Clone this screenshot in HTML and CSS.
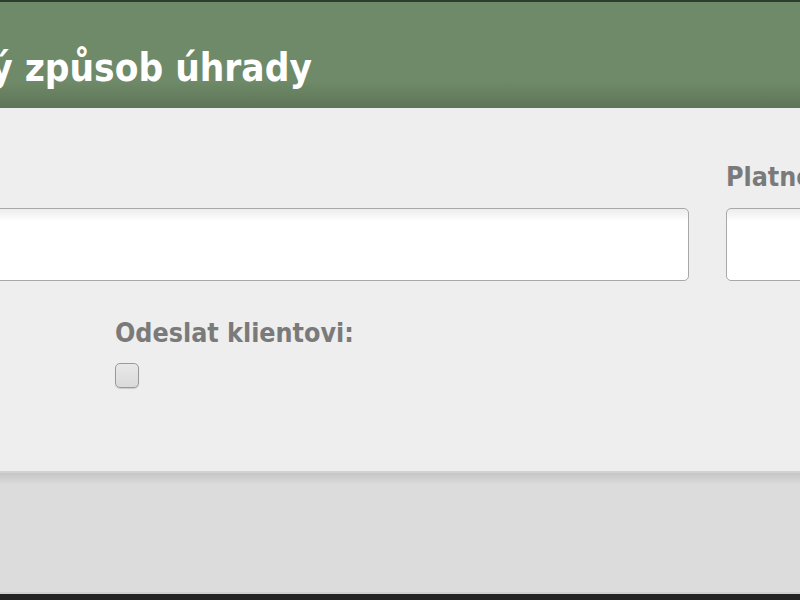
FILE: index.html
```html
<!DOCTYPE html>
<html lang="cs">
<head>
<meta charset="utf-8">
<title>Nový způsob úhrady</title>
<link rel="stylesheet" href="styles.css">
</head>
<body>
<div class="backdrop">
  <div class="modal">
    <div class="modal-header">
      <h1 class="modal-title">Nový způsob úhrady</h1>
    </div>
    <div class="modal-body">
      <div class="form-row">
        <div class="field field-wide">
          <label class="field-label">Název:</label>
          <div class="input"></div>
        </div>
        <div class="field field-narrow">
          <label class="field-label">Platnost do:</label>
          <div class="input"></div>
        </div>
      </div>
      <div class="form-row form-row-second">
        <div class="field field-small"></div>
        <div class="field">
          <label class="field-label">Odeslat klientovi:</label>
          <span class="checkbox"></span>
        </div>
      </div>
    </div>
    <div class="modal-footer"></div>
  </div>
</div>
</body>
</html>
```

FILE: styles.css
```css
html, body {
  margin: 0;
  padding: 0;
  height: 100%;
  overflow: hidden;
  background: #222222;
}

.backdrop {
  width: 800px;
  height: 600px;
  overflow: hidden;
  background: #222222;
  padding-top: 2px;
  box-sizing: border-box;
}

.modal {
  margin-left: -160px;
  width: 1340px;
  font-family: "DejaVu Sans Condensed", "DejaVu Sans", sans-serif;
  font-weight: bold;
  box-shadow: 0 -2px 0 #2b3d2b;
}

.modal-header {
  height: 106px;
  box-sizing: border-box;
  background: linear-gradient(to bottom, #6f8a68 0%, #6f8a68 75%, #5e7558 100%);
  padding-left: 75px;
  display: flex;
  align-items: flex-end;
}

.modal-title {
  margin: 0 0 19px 0;
  color: #ffffff;
  font-size: 38.4px;
  line-height: 42px;
  font-weight: bold;
}

.modal-body {
  background: #eeeeee;
  height: 363px;
  box-sizing: border-box;
  padding: 54px 0 0 30px;
}

.form-row {
  display: flex;
  gap: 37px;
}

.form-row-second {
  gap: 0;
  margin-top: 37px;
}

.field {
  display: flex;
  flex-direction: column;
  align-items: flex-start;
}

.field-wide { width: 819px; }
.field-narrow { width: 300px; }
.field-small { width: 245px; }

.field-label {
  color: #7a7a7a;
  font-size: 26.6px;
  line-height: 30px;
  margin-bottom: 16px;
}

.form-row-second .field-label {
  margin-bottom: 15px;
}

.input {
  align-self: stretch;
  height: 73px;
  box-sizing: border-box;
  background: #ffffff linear-gradient(to bottom, #ececec 0, #ffffff 12px);
  border: 1px solid #a8a8a8;
  border-radius: 5px;
}

.checkbox {
  display: block;
  width: 24px;
  height: 25px;
  box-sizing: border-box;
  border: 1px solid #9a9a9a;
  border-radius: 5px;
  background: linear-gradient(to bottom, #e8e8e8, #dadada);
  box-shadow: 0 1px 1px rgba(0,0,0,0.15);
}

.modal-footer {
  height: 123px;
  box-sizing: border-box;
  border-top: 2px solid #d2d2d2;
  background: linear-gradient(to bottom, #c6c6c6 0, #dcdcdc 12px, #dcdcdc 100%);
  border-bottom: 2px solid #cfcfcf;
}
```
